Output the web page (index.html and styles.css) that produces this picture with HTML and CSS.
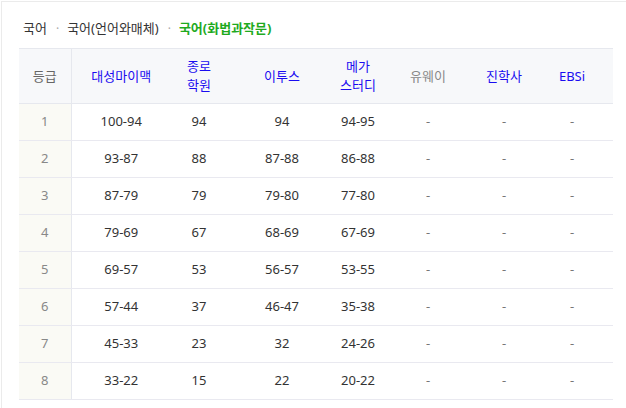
FILE: index.html
```html
<!DOCTYPE html>
<html lang="ko">
<head>
<meta charset="utf-8">
<link rel="stylesheet" href="styles.css">
</head>
<body>
<div class="card">
  <div class="crumbs">
    <span class="crumb">국어</span><span class="sep">·</span><span class="crumb">국어(언어와매체)</span><span class="sep">·</span><span class="crumb active">국어(화법과작문)</span>
  </div>
  <table class="grades">
    <colgroup>
      <col class="w1"><col class="w2"><col class="w3"><col class="w4"><col class="w5"><col class="w6"><col class="w7"><col class="w8">
    </colgroup>
    <thead>
      <tr>
        <th class="g">등급</th>
        <th class="link">대성마이맥</th>
        <th class="link">종로<br>학원</th>
        <th class="link">이투스</th>
        <th class="link">메가<br>스터디</th>
        <th class="muted">유웨이</th>
        <th class="link">진학사</th>
        <th class="link">EBSi</th>
      </tr>
    </thead>
    <tbody>
      <tr><td class="g">1</td><td>100-94</td><td>94</td><td>94</td><td>94-95</td><td class="d">-</td><td class="d">-</td><td class="d">-</td></tr>
      <tr><td class="g">2</td><td>93-87</td><td>88</td><td>87-88</td><td>86-88</td><td class="d">-</td><td class="d">-</td><td class="d">-</td></tr>
      <tr><td class="g">3</td><td>87-79</td><td>79</td><td>79-80</td><td>77-80</td><td class="d">-</td><td class="d">-</td><td class="d">-</td></tr>
      <tr><td class="g">4</td><td>79-69</td><td>67</td><td>68-69</td><td>67-69</td><td class="d">-</td><td class="d">-</td><td class="d">-</td></tr>
      <tr><td class="g">5</td><td>69-57</td><td>53</td><td>56-57</td><td>53-55</td><td class="d">-</td><td class="d">-</td><td class="d">-</td></tr>
      <tr><td class="g">6</td><td>57-44</td><td>37</td><td>46-47</td><td>35-38</td><td class="d">-</td><td class="d">-</td><td class="d">-</td></tr>
      <tr><td class="g">7</td><td>45-33</td><td>23</td><td>32</td><td>24-26</td><td class="d">-</td><td class="d">-</td><td class="d">-</td></tr>
      <tr><td class="g">8</td><td>33-22</td><td>15</td><td>22</td><td>20-22</td><td class="d">-</td><td class="d">-</td><td class="d">-</td></tr>
    </tbody>
  </table>
</div>
</body>
</html>
```
FILE: styles.css
```css
* { box-sizing: border-box; }
html, body { margin: 0; padding: 0; background: #fff; }
body {
  font-family: "Noto Sans", "Noto Sans CJK KR", sans-serif;
  font-size: 13px;
  color: #333;
}
.card {
  margin: 1px 0 0 1px;
  border-left: 1px solid #ebebeb;
  border-top: 1px solid #ebebeb;
  padding: 0 0 0 17px;
  height: 407px;
}
.crumbs {
  height: 46px;
  padding: 17px 0 0 4px;
  line-height: 18px;
  white-space: nowrap;
}
.crumb { color: #333; }
.crumb.active { color: #1faa1f; font-weight: 700; }
.sep { color: #aaa; margin: 0 8px 0 9px; font-size: 12px; }
.grades {
  width: 594px;
  border-collapse: collapse;
  table-layout: fixed;
}
.w1 { width: 52px; }
.w2 { width: 100px; }
.w3 { width: 56px; }
.w4 { width: 110px; }
.w5 { width: 42px; }
.w6 { width: 98px; }
.w7 { width: 54px; }
.w8 { width: 82px; }
.grades th {
  height: 55px;
  background: #f7f8fa;
  font-weight: 400;
  line-height: 19px;
  padding: 0;
  text-align: center;
  white-space: nowrap;
  border-top: 1px solid #e6e8ee;
  border-bottom: 1px solid #e6e8ee;
}
.grades td {
  height: 37px;
  padding: 0 0 2px;
  text-align: center;
  border-bottom: 1px solid #e9e9f0;
  color: #333;
}
.grades th.g { color: #666; border-right: 1px solid #e6e8ee; }
.grades td.g { color: #888; background: #fafaf5; border-right: 1px solid #e6e8ee; }
.grades th.link { color: #1a0cf0; }
.grades th.muted { color: #888; }
.grades td.d { color: #777; }
```
